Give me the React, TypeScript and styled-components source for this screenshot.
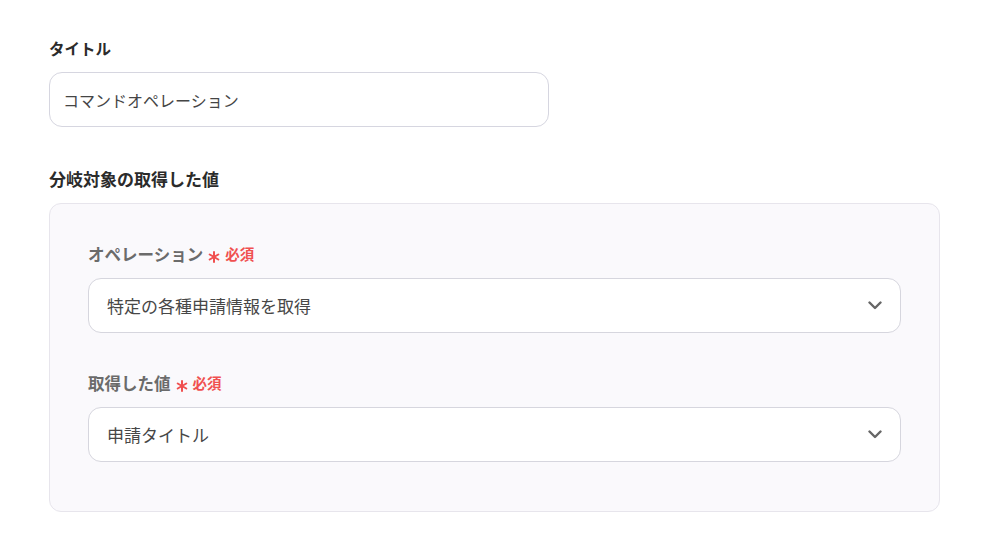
import React from 'react';
import styled, { createGlobalStyle } from 'styled-components';

const GlobalStyle = createGlobalStyle`
  body {
    margin: 0;
    background: #ffffff;
    font-family: "Noto Sans CJK JP", "Noto Sans", sans-serif;
  }
`;

const Page = styled.div`
  padding: 36px 47px 36px 49px;
  display: flex;
  flex-direction: column;
`;

const Field = styled.div`
  display: flex;
  flex-direction: column;
  margin-bottom: 40px;
`;

const Heading = styled.div<{ $size: number }>`
  font-size: ${(p) => p.$size}px;
  font-weight: 700;
  color: #2b2b2b;
  line-height: 24px;
  margin-bottom: 12px;
`;

const TextInput = styled.div`
  box-sizing: border-box;
  width: 500px;
  height: 55px;
  border: 1px solid #d6d6e0;
  border-radius: 13px;
  padding: 0 13px;
  display: flex;
  align-items: center;
  font-size: 16px;
  color: #454545;
  background: #fff;
`;

const Panel = styled.div`
  box-sizing: border-box;
  width: 891px;
  height: 309px;
  background: #faf9fc;
  border: 1px solid #e7e5ec;
  border-radius: 12px;
  padding: 38px 38px 0 38px;
  display: flex;
  flex-direction: column;
  gap: 38px;
`;

const SubField = styled.div`
  display: flex;
  flex-direction: column;
`;

const SubLabel = styled.div`
  display: flex;
  align-items: center;
  font-size: 16.5px;
  font-weight: 700;
  color: #6b6b6b;
  line-height: 24px;
  margin-bottom: 12px;
`;

const Asterisk = styled.svg`
  margin: 5px 5px 0 5px;
`;

const Required = styled.span`
  color: #f05050;
  font-size: 14.5px;
  font-weight: 700;
`;

const Select = styled.div`
  box-sizing: border-box;
  height: 55px;
  border: 1px solid #d6d6de;
  border-radius: 13px;
  background: #fff;
  padding: 0 18px 0 18px;
  display: flex;
  align-items: center;
  justify-content: space-between;
  font-size: 17px;
  color: #474747;
`;

const Star = () => (
  <Asterisk width="12" height="12" viewBox="0 0 12 12" fill="none">
    <g stroke="#f05050" strokeWidth="2" strokeLinecap="round">
      <path d="M6 1V11" />
      <path d="M1.7 3.5L10.3 8.5" />
      <path d="M1.7 8.5L10.3 3.5" />
    </g>
  </Asterisk>
);

const Chevron = () => (
  <svg width="14" height="9" viewBox="0 0 14 9" fill="none">
    <path d="M1.5 1.5L7 7L12.5 1.5" stroke="#666" strokeWidth="2.4" strokeLinecap="round" strokeLinejoin="round" />
  </svg>
);

export default function App() {
  return (
    <>
      <GlobalStyle />
      <Page>
        <Field>
          <Heading $size={15.5}>タイトル</Heading>
          <TextInput>コマンドオペレーション</TextInput>
        </Field>
        <Heading $size={17}>分岐対象の取得した値</Heading>
        <Panel>
          <SubField>
            <SubLabel>
              オペレーション<Star /><Required>必須</Required>
            </SubLabel>
            <Select>
              特定の各種申請情報を取得
              <Chevron />
            </Select>
          </SubField>
          <SubField>
            <SubLabel>
              取得した値<Star /><Required>必須</Required>
            </SubLabel>
            <Select>
              申請タイトル
              <Chevron />
            </Select>
          </SubField>
        </Panel>
      </Page>
    </>
  );
}
